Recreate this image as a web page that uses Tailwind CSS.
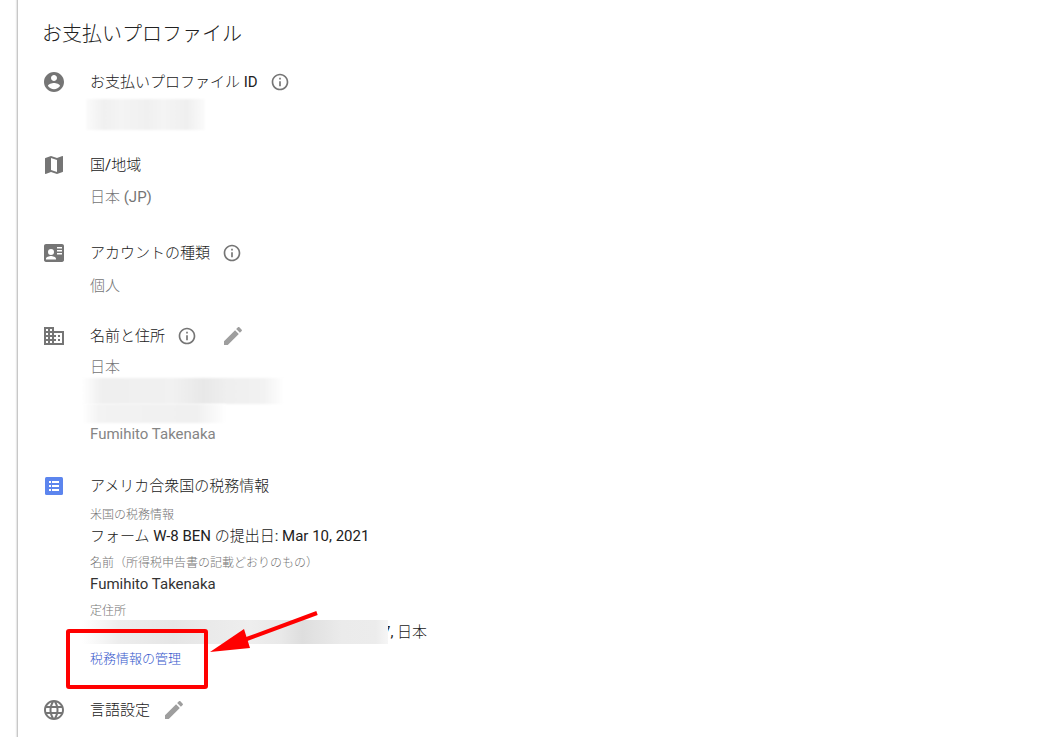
<!DOCTYPE html>
<html lang="ja">

<head>
    <meta charset="UTF-8" />
    <title>お支払いプロファイル</title>
    <meta name="viewport" content="width=device-width, initial-scale=1" />
    <script src="https://cdn.jsdelivr.net/npm/@tailwindcss/browser@4"></script>
</head>

<body class="bg-white pl-[17px] font-['Roboto','Noto_Sans_CJK_JP_Light','Noto_Sans_CJK_JP',sans-serif] text-[15px] leading-6 text-[#212121]">

    <!-- shared icons -->
    <svg class="hidden">
        <symbol id="info" viewBox="0 0 24 24"><path d="M11 17h2v-6h-2v6zm1-15C6.480 2 2 6.480 2 12s4.480 10 10 10 10-4.480 10-10S17.520 2 12 2zm0 18c-4.410 0-8-3.590-8-8s3.590-8 8-8 8 3.590 8 8-3.590 8-8 8zM11 9h2V7h-2v2z" /></symbol>
        <symbol id="edit" viewBox="0 0 24 24"><path d="M3 17.250V21h3.750L17.810 9.940l-3.750-3.750L3 17.250zM20.710 7.040c.39-.39.39-1.020 0-1.410l-2.340-2.340c-.39-.39-1.020-.39-1.410 0l-1.830 1.830 3.750 3.750 1.830-1.830z" /></symbol>
    </svg>

    <main class="min-h-screen border-l border-[#c8c8c8] pt-5 pl-6 shadow-[-1px_0_1px_#e8e8e8]">
        <h1 class="text-xl leading-7">お支払いプロファイル</h1>

        <section class="mt-[22px] flex gap-6">
            <svg class="size-6 shrink-0 fill-[#757575]" viewBox="0 0 24 24"><path d="M12 2C6.480 2 2 6.480 2 12s4.480 10 10 10 10-4.480 10-10S17.520 2 12 2zm0 3c1.660 0 3 1.340 3 3s-1.340 3-3 3-3-1.340-3-3 1.340-3 3-3zm0 14.200c-2.500 0-4.710-1.280-6-3.220.03-1.990 4-3.080 6-3.080 1.990 0 5.970 1.090 6 3.080-1.290 1.940-3.500 3.220-6 3.220z" /></svg>
            <div>
                <div class="flex items-center gap-3">
                    <h2>お支払いプロファイル ID</h2>
                    <button type="button" aria-label="情報"><svg class="size-5 fill-[#757575]"><use href="#info" /></svg></button>
                </div>
                <div class="-ml-1 mt-[5px] h-[31px] w-[119px] bg-[linear-gradient(90deg,#fbfbfb,#f0f0f0_15%,#f4f4f4_30%,#f0f0f0_52%,#f4f4f4_65%,#efefef_85%,#fbfbfb)] blur-[1px]"></div>
            </div>
        </section>

        <section class="mt-[23px] flex gap-6">
            <svg class="size-6 shrink-0 fill-[#757575]" viewBox="0 0 24 24"><path d="M20.500 3l-.16.03L15 5.100 9 3 3.360 4.900c-.21.07-.36.250-.36.480V20.500c0 .28.220.5.500.5l.16-.03L9 18.900l6 2.100 5.640-1.900c.21-.07.36-.250.36-.480V3.500c0-.28-.220-.5-.500-.5zM15 19l-6-2.110V5l6 2.110V19z" /></svg>
            <div>
                <h2>国/地域</h2>
                <p class="mt-2 text-[#757575]">日本 (JP)</p>
            </div>
        </section>

        <section class="mt-8 flex gap-6">
            <svg class="size-6 shrink-0 fill-[#757575]" viewBox="0 0 24 24"><path fill-rule="evenodd" d="M20 3H4c-1.100 0-2 .9-2 2v14c0 .9.700 2 2 2h16c1.300 0 2-1.100 2-2V5c0-1.100-.9-2-2-2zM9 8a3 3 0 1 1 0 6 3 3 0 0 1 0-6zm5 10.500H4v-.8c0-1.700 3.300-2.700 5-2.700s5 1 5 2.700v.8zM15 6h5v1.500h-5zM15 9h5v1.500h-5zM15 12h5v1.500h-5z" /></svg>
            <div>
                <div class="flex items-center gap-3">
                    <h2>アカウントの種類</h2>
                    <button type="button" aria-label="情報"><svg class="size-5 fill-[#757575]"><use href="#info" /></svg></button>
                </div>
                <p class="mt-[9px] text-[#757575]">個人</p>
            </div>
        </section>

        <section class="mt-[26px] flex gap-6">
            <svg class="size-6 shrink-0 fill-[#757575]" viewBox="0 0 24 24"><path d="M12 7V3H2v18h20V7H12zM6 19H4v-2h2v2zm0-4H4v-2h2v2zm0-4H4V9h2v2zm0-4H4V5h2v2zm4 12H8v-2h2v2zm0-4H8v-2h2v2zm0-4H8V9h2v2zm0-4H8V5h2v2zm10 12h-8v-2h2v-2h-2v-2h2v-2h-2V9h8v10zm-2-8h-2v2h2v-2zm0 4h-2v2h2v-2z" /></svg>
            <div>
                <div class="flex items-center gap-3">
                    <h2>名前と住所</h2>
                    <button type="button" aria-label="情報"><svg class="size-5 fill-[#757575]"><use href="#info" /></svg></button>
                    <button type="button" aria-label="編集" class="ml-3"><svg class="size-6 fill-[#9e9e9e]"><use href="#edit" /></svg></button>
                </div>
                <div class="mt-2 leading-[22px] text-[#757575]">
                    <p>日本</p>
                    <div class="-ml-2 h-[26px] w-[202px] bg-[linear-gradient(90deg,#ffffff,#efefef_10%,#f1f1f1_45%,#e8e8e8_60%,#efefef_72%,#f2f2f2_90%,#ffffff)] blur-[1px]"></div>
                    <div class="-ml-2 h-[19px] w-[144px] bg-[linear-gradient(90deg,#ffffff,#f3f3f3_12%,#f1f1f1_60%,#f0f0f0_80%,#ffffff)] blur-[1px]"></div>
                    <p class="text-[#858585]">Fumihito Takenaka</p>
                </div>
            </div>
        </section>

        <section class="mt-[29px] flex gap-6">
            <svg class="size-6 shrink-0" viewBox="0 0 24 24"><rect x="3" y="3" width="18" height="18" rx="1.500" fill="#5c85ee" /><path fill="#fff" d="M7 7h2v2H7zM7 11h2v2H7zM7 15h2v2H7zM10 7h7v2h-7zM10 11h7v2h-7zM10 15h7v2h-7z" /></svg>
            <div>
                <h2>アメリカ合衆国の税務情報</h2>
                <dl class="mt-[7px] flex flex-col gap-1.5">
                    <div>
                        <dt class="text-xs leading-5 text-[#757575]">米国の税務情報</dt>
                        <dd class="leading-[22px]">フォーム W-8 BEN の提出日: Mar 10, 2021</dd>
                    </div>
                    <div>
                        <dt class="text-xs leading-5 text-[#757575]">名前（所得税申告書の記載どおりのもの）</dt>
                        <dd class="leading-[22px] text-[#333333]">Fumihito Takenaka</dd>
                    </div>
                    <div>
                        <dt class="text-xs leading-5 text-[#757575]">定住所</dt>
                        <dd class="flex leading-[22px]">
                            <div class="z-10 -mt-px -mr-1.5 -ml-2 h-6 w-[306px] bg-[linear-gradient(90deg,#ffffff,#ededed_12%,#e6e6e6_30%,#eeeeee_55%,#e9e9e9_65%,#dedede_72%,#ebebeb_85%,#ececec_96%,#f6f6f6)]"></div>
                            <span>7, 日本</span>
                        </dd>
                    </div>
                </dl>
                <div class="relative mt-[5px] w-fit text-[13px] leading-5">
                    <a href="#" class="text-[#3557cc]">税務情報の管理</a>
                    <!-- highlight frame and arrow -->
                    <div class="pointer-events-none absolute -top-5 -left-6 z-20 h-[60px] w-[142px] rounded-[3px] border-4 border-[#ff0000]"></div>
                    <svg class="pointer-events-none absolute -top-10 left-[118px] z-20 h-12 w-28" viewBox="0 0 112 48"><path d="M109 4L36 31" stroke="#ff0000" stroke-width="4" /><path fill="#ff0000" d="M2 43L36 20L42 39z" /></svg>
                </div>
            </div>
        </section>

        <section class="mt-[29px] flex gap-6">
            <svg class="size-6 shrink-0 fill-[#757575]" viewBox="0 0 24 24"><path d="M11.990 2C6.470 2 2 6.480 2 12s4.470 10 9.990 10C17.520 22 22 17.520 22 12S17.520 2 11.990 2zm6.930 6h-2.950c-.320-1.250-.780-2.450-1.380-3.560 1.840.630 3.370 1.910 4.330 3.560zM12 4.040c.830 1.200 1.480 2.530 1.910 3.960h-3.820c.430-1.430 1.080-2.760 1.910-3.960zM4.260 14C4.100 13.360 4 12.690 4 12s.1-1.360.26-2h3.380c-.080.660-.140 1.320-.140 2s.06 1.340.14 2H4.260zm.82 2h2.950c.320 1.250.780 2.450 1.380 3.560-1.840-.630-3.370-1.900-4.330-3.560zm2.950-8H5.080c.960-1.660 2.490-2.930 4.330-3.560C8.810 5.550 8.350 6.750 8.030 8zM12 19.960c-.830-1.200-1.480-2.530-1.910-3.960h3.820c-.430 1.430-1.080 2.760-1.910 3.960zM14.340 14H9.660c-.090-.660-.160-1.320-.160-2s.07-1.350.16-2h4.680c.090.650.160 1.320.160 2s-.07 1.340-.16 2zm.25 5.560c.6-1.110 1.060-2.310 1.380-3.560h2.950c-.960 1.650-2.490 2.930-4.330 3.560zM16.360 14c.080-.660.140-1.320.140-2s-.06-1.340-.14-2h3.380c.160.640.260 1.310.260 2s-.1 1.360-.26 2h-3.380z" /></svg>
            <div>
                <div class="flex items-center gap-3">
                    <h2>言語設定</h2>
                    <button type="button" aria-label="編集"><svg class="size-6 fill-[#9e9e9e]"><use href="#edit" /></svg></button>
                </div>
                <p class="mt-3 text-[#757575]">日本語</p>
            </div>
        </section>
    </main>

</body>

</html>
